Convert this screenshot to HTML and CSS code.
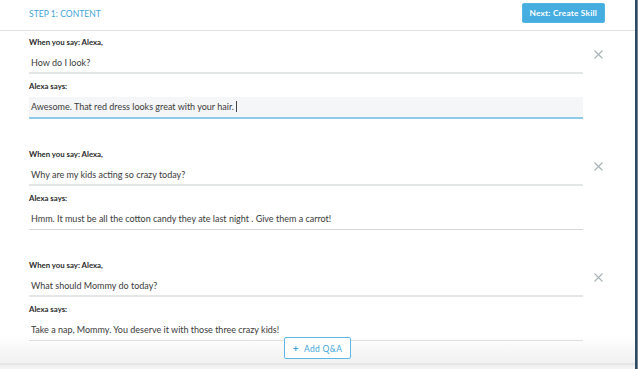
FILE: index.html
```html
<!DOCTYPE html>
<html>
<head>
<meta charset="utf-8">
<link rel="stylesheet" href="styles.css">
</head>
<body>
<div class="app">
  <div class="page">
    <header class="header">
      <div class="step">STEP 1: CONTENT</div>
      <button class="next-btn">Next: Create Skill</button>
    </header>
    <main class="list">
      <section class="qa">
        <div class="fields">
          <div class="label">When you say: Alexa,</div>
          <div class="input q">How do I look?</div>
          <div class="label">Alexa says:</div>
          <div class="input a focused">Awesome. That red dress looks great with your hair.<span class="caret"></span></div>
        </div>
        <div class="remove"><svg width="9" height="9" viewBox="0 0 9 9"><path d="M0.5 0.5L8.5 8.5M8.5 0.5L0.5 8.5" stroke="#a8b3b7" stroke-width="1.1" fill="none"/></svg></div>
      </section>
      <section class="qa">
        <div class="fields">
          <div class="label">When you say: Alexa,</div>
          <div class="input q">Why are my kids acting so crazy today?</div>
          <div class="label">Alexa says:</div>
          <div class="input a">Hmm. It must be all the cotton candy they ate last night . Give them a carrot!</div>
        </div>
        <div class="remove"><svg width="9" height="9" viewBox="0 0 9 9"><path d="M0.5 0.5L8.5 8.5M8.5 0.5L0.5 8.5" stroke="#a8b3b7" stroke-width="1.1" fill="none"/></svg></div>
      </section>
      <section class="qa">
        <div class="fields">
          <div class="label">When you say: Alexa,</div>
          <div class="input q">What should Mommy do today?</div>
          <div class="label">Alexa says:</div>
          <div class="input a">Take a nap, Mommy. You deserve it with those three crazy kids!</div>
        </div>
        <div class="remove"><svg width="9" height="9" viewBox="0 0 9 9"><path d="M0.5 0.5L8.5 8.5M8.5 0.5L0.5 8.5" stroke="#a8b3b7" stroke-width="1.1" fill="none"/></svg></div>
      </section>
    </main>
    <footer class="footer">
      <button class="add-btn"><span class="plus">+</span> Add Q&amp;A</button>
    </footer>
  </div>
  <div class="edge"></div>
</div>
</body>
</html>
```

FILE: styles.css
```css
* { box-sizing: border-box; }
html, body {
  margin: 0;
  padding: 0;
  width: 638px;
  height: 369px;
  overflow: hidden;
  background: #ffffff;
  font-family: Lato, "Open Sans", sans-serif;
}
.app {
  display: flex;
  width: 638px;
  height: 369px;
}
.page {
  position: relative;
  flex: 1;
  display: flex;
  flex-direction: column;
  overflow: hidden;
}
.edge {
  width: 3px;
  background: #2d4a61;
  border-right: 1px solid #6d8597;
}
.header {
  height: 31px;
  flex: none;
  display: flex;
  align-items: center;
  justify-content: space-between;
  padding: 0 30px 0 29px;
  border-bottom: 1px solid #e2e4ea;
}
.step {
  color: #3ea5d8;
  font-size: 8.5px;
  letter-spacing: 0.05px;
  margin-top: -3px;
}
.next-btn {
  height: 20px;
  margin-top: -5px;
  padding: 0 7px;
  border: 1px solid #52b6e4;
  border-radius: 2px;
  background: #45ade0;
  color: #ffffff;
  font-family: Lato, sans-serif;
  font-weight: 700;
  font-size: 8.3px;
  letter-spacing: 0.2px;
}
.list {
  padding: 6px 0 0 29px;
}
.qa {
  display: flex;
  margin-bottom: 30px;
}
.fields {
  width: 554px;
  flex: none;
}
.label {
  font-size: 7.8px;
  font-weight: 700;
  color: #2a2a2a;
  line-height: 11px;
  height: 11px;
  margin-bottom: 5px;
}
.input {
  font-size: 9px;
  color: #3a3a3a;
  padding-left: 2px;
  white-space: nowrap;
}
.input.q {
  height: 21px;
  line-height: 19px;
  border-bottom: 2px solid #e4e7e7;
  margin-bottom: 7px;
}
.input.a {
  height: 21px;
  line-height: 20px;
  border-bottom: 1px solid #d5d8d9;
}
.input.a.focused {
  height: 22px;
  background: #f5f6f8;
  border-bottom: 2px solid #8ecbe9;
}
.caret {
  display: inline-block;
  width: 1px;
  height: 11px;
  background: #444;
  margin-left: 2px;
  vertical-align: -2px;
}
.remove {
  width: 30px;
  padding-top: 13px;
  display: flex;
  justify-content: center;
}
.remove svg { display: block; }
.footer {
  position: absolute;
  left: 0;
  right: 0;
  bottom: 0;
  height: 33px;
  display: flex;
  justify-content: center;
  align-items: flex-start;
  padding-top: 1px;
  background: linear-gradient(to bottom, rgba(255,255,255,0) 0px, rgba(245,245,245,0.7) 12px, #f1f1f1 27px, #dcdcdc 28px, #eeeeee 29px, #f4f4f4 33px);
}
.add-btn {
  width: 67px;
  height: 22px;
  border: 1px solid #5cb9e5;
  border-radius: 2px;
  background: #ffffff;
  color: #3ea5d8;
  font-family: Lato, sans-serif;
  font-size: 8.5px;
  letter-spacing: 0.3px;
  padding: 0;
}
.plus {
  font-weight: 700;
  font-size: 10px;
  margin-right: 3px;
}
```
